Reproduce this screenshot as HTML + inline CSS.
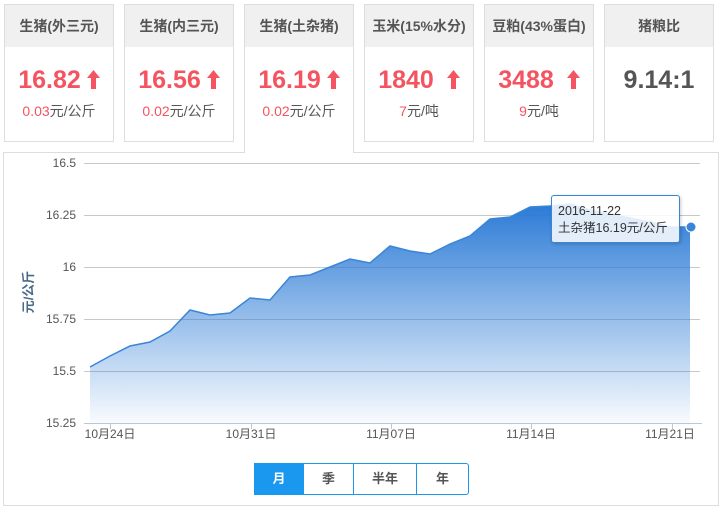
<!DOCTYPE html>
<html><head><meta charset="utf-8">
<style>
*{margin:0;padding:0;box-sizing:border-box}
body{width:723px;height:513px;background:#fff;font-family:"Liberation Sans","Noto Sans CJK SC",sans-serif;position:relative;overflow:hidden}
.card{position:absolute;top:4px;width:110px;height:138px;border:1px solid #ddd;background:#fff;text-align:center}
.card .h{height:42px;background:#f0f0f0;color:#555;font-weight:bold;font-size:14px;line-height:42px}
.card .v{margin-top:18px;font-size:25px;font-weight:bold;color:#f4545f;line-height:30px}
.card .v svg{vertical-align:-1px;margin-left:6px}
.card .s{margin-top:6px;font-size:14px;color:#555}
.card .s b{font-weight:normal;color:#f4545f}
.card.act{height:149px;border-bottom:none;z-index:2}
.panel{position:absolute;left:3px;top:152px;width:716px;height:354px;border:1px solid #ddd;background:#fff}
.tip{position:absolute;left:551px;top:195px;width:129px;height:48px;border:1px solid #3a85d8;border-radius:3px;background:rgba(255,255,255,0.85);font-size:12.5px;color:#333;padding:7px 0 0 6px;line-height:17px;box-shadow:1px 1px 3px rgba(0,0,0,.2);z-index:5}
.btns{position:absolute;left:254px;top:463px;height:32px;display:flex;border:1px solid #1a97ee;border-radius:0 3px 3px 0;z-index:5}
.btns div{height:30px;line-height:30px;text-align:center;font-size:13px;font-weight:bold;color:#555;border-left:1px solid #1a97ee}
.btns div:first-child{border-left:none;background:#1a97ee;color:#fff}
</style></head><body>
<div class="card" style="left:4px"><div class="h">生猪(外三元)</div><div class="v">16.82<svg width="13" height="19" viewBox="0 0 13 19"><path d="M6.5 0 L13 8 L9 8 L9 19 L4 19 L4 8 L0 8 Z" fill="#f4545f"/></svg></div><div class="s"><b>0.03</b>元/公斤</div></div>
<div class="card" style="left:124px"><div class="h">生猪(内三元)</div><div class="v">16.56<svg width="13" height="19" viewBox="0 0 13 19"><path d="M6.5 0 L13 8 L9 8 L9 19 L4 19 L4 8 L0 8 Z" fill="#f4545f"/></svg></div><div class="s"><b>0.02</b>元/公斤</div></div>
<div class="card act" style="left:244px"><div class="h">生猪(土杂猪)</div><div class="v">16.19<svg width="13" height="19" viewBox="0 0 13 19"><path d="M6.5 0 L13 8 L9 8 L9 19 L4 19 L4 8 L0 8 Z" fill="#f4545f"/></svg></div><div class="s"><b>0.02</b>元/公斤</div></div>
<div class="card" style="left:364px"><div class="h">玉米(15%水分)</div><div class="v">1840 <svg width="13" height="19" viewBox="0 0 13 19"><path d="M6.5 0 L13 8 L9 8 L9 19 L4 19 L4 8 L0 8 Z" fill="#f4545f"/></svg></div><div class="s"><b>7</b>元/吨</div></div>
<div class="card" style="left:484px"><div class="h">豆粕(43%蛋白)</div><div class="v">3488 <svg width="13" height="19" viewBox="0 0 13 19"><path d="M6.5 0 L13 8 L9 8 L9 19 L4 19 L4 8 L0 8 Z" fill="#f4545f"/></svg></div><div class="s"><b>9</b>元/吨</div></div>
<div class="card" style="left:604px"><div class="h">猪粮比</div><div class="v" style="color:#555">9.14:1</div></div>
<div class="panel"></div>
<svg style="position:absolute;left:0;top:0;z-index:3" width="723" height="513">
<defs><linearGradient id="g" gradientUnits="userSpaceOnUse" x1="0" y1="205" x2="0" y2="423"><stop offset="0" stop-color="#2c7bd6"/><stop offset="1" stop-color="#2c7bd6" stop-opacity="0.03"/></linearGradient></defs>
<g stroke="#c8c8c8" stroke-width="1">
<line x1="84" y1="163.5" x2="700" y2="163.5"/><line x1="84" y1="215.5" x2="700" y2="215.5"/><line x1="84" y1="267.5" x2="700" y2="267.5"/><line x1="84" y1="319.5" x2="700" y2="319.5"/><line x1="84" y1="371.5" x2="700" y2="371.5"/>
</g>
<path d="M90,367 L110,356 L130,346 L150,342 L170,331 L190,310 L210,315 L230,313 L250,298 L270,300 L290,277 L310,275 L330,267 L350,259 L370,263 L390,246 L410,251 L430,254 L450,244 L470,236 L490,219 L510,217 L530,207 L550,206 L570,204 L590,210 L610,214 L630,218 L650,222 L670,227 L690,227 L690,423 L90,423 Z" fill="url(#g)"/>
<path d="M90,367 L110,356 L130,346 L150,342 L170,331 L190,310 L210,315 L230,313 L250,298 L270,300 L290,277 L310,275 L330,267 L350,259 L370,263 L390,246 L410,251 L430,254 L450,244 L470,236 L490,219 L510,217 L530,207 L550,206 L570,204 L590,210 L610,214 L630,218 L650,222 L670,227 L690,227" fill="none" stroke="#3a85d8" stroke-width="1.5"/>
<line x1="84" y1="423.5" x2="702" y2="423.5" stroke="#b8c8d8"/>
<g stroke="#b8c8d8"><line x1="110.5" y1="423" x2="110.5" y2="429"/><line x1="251.5" y1="423" x2="251.5" y2="429"/><line x1="391.5" y1="423" x2="391.5" y2="429"/><line x1="531.5" y1="423" x2="531.5" y2="429"/><line x1="672.5" y1="423" x2="672.5" y2="429"/></g>
<circle cx="691" cy="227" r="5" fill="#3a85d8" stroke="#fff" stroke-width="1"/>
<g font-family="Liberation Sans,Noto Sans CJK SC,sans-serif" font-size="12" fill="#555" text-anchor="end">
<text x="76" y="167">16.5</text><text x="76" y="219">16.25</text><text x="76" y="271">16</text><text x="76" y="323">15.75</text><text x="76" y="375">15.5</text><text x="76" y="427">15.25</text>
</g>
<g font-family="Liberation Sans,Noto Sans CJK SC,sans-serif" font-size="12" fill="#555" text-anchor="middle">
<text x="110" y="438">10月24日</text><text x="251" y="438">10月31日</text><text x="391" y="438">11月07日</text><text x="531" y="438">11月14日</text><text x="670" y="438">11月21日</text>
</g>
<text x="0" y="0" transform="translate(33,292) rotate(-90)" text-anchor="middle" font-family="Liberation Sans,Noto Sans CJK SC,sans-serif" font-size="13" font-weight="bold" fill="#4a6a8a">元/公斤</text>
</svg>
<div class="tip">2016-11-22<br>土杂猪16.19元/公斤</div>
<div class="btns"><div style="width:48px">月</div><div style="width:50px">季</div><div style="width:63px">半年</div><div style="width:52px">年</div></div>
</body></html>
